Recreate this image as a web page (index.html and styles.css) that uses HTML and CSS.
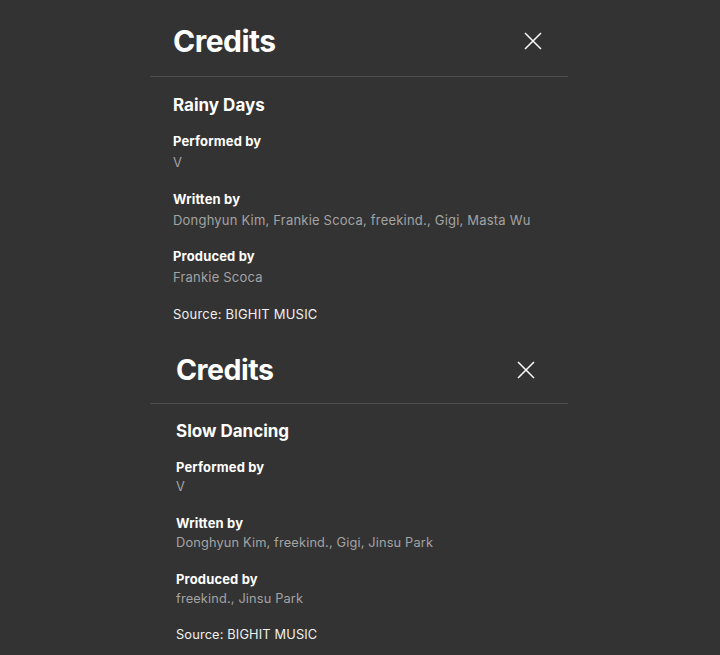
FILE: index.html
```html
<!DOCTYPE html>
<html lang="en">
<head>
    <meta charset="UTF-8">
    <meta name="viewport" content="width=device-width, initial-scale=1.0">
    <title>Credits</title>
    <link rel="stylesheet" href="styles.css">
</head>
<body>
    <div class="credits">
        <div class="credits-header">
            <h1 class="credits-title">Credits</h1>
            <button class="close-btn" aria-label="Close">
                <svg width="18" height="18" viewBox="0 0 18 18"><path d="M1 1L17 17M17 1L1 17" stroke="#fff" stroke-width="1.5" fill="none"/></svg>
            </button>
        </div>
        <div class="credits-body">
            <h2 class="track-name">Rainy Days</h2>
            <div class="role">
                <div class="role-label">Performed by</div>
                <div class="role-names">V</div>
            </div>
            <div class="role">
                <div class="role-label">Written by</div>
                <div class="role-names">Donghyun Kim, Frankie Scoca, freekind., Gigi, Masta Wu</div>
            </div>
            <div class="role">
                <div class="role-label">Produced by</div>
                <div class="role-names">Frankie Scoca</div>
            </div>
            <div class="source">Source: BIGHIT MUSIC</div>
        </div>
    </div>

    <div class="credits credits-second">
        <div class="credits-header">
            <h1 class="credits-title">Credits</h1>
            <button class="close-btn" aria-label="Close">
                <svg width="18" height="18" viewBox="0 0 18 18"><path d="M1 1L17 17M17 1L1 17" stroke="#fff" stroke-width="1.5" fill="none"/></svg>
            </button>
        </div>
        <div class="credits-body">
            <h2 class="track-name">Slow Dancing</h2>
            <div class="role">
                <div class="role-label">Performed by</div>
                <div class="role-names">V</div>
            </div>
            <div class="role">
                <div class="role-label">Written by</div>
                <div class="role-names">Donghyun Kim, freekind., Gigi, Jinsu Park</div>
            </div>
            <div class="role">
                <div class="role-label">Produced by</div>
                <div class="role-names">freekind., Jinsu Park</div>
            </div>
            <div class="source">Source: BIGHIT MUSIC</div>
        </div>
    </div>
</body>
</html>
```

FILE: styles.css
```css
body {
    margin: 0;
    background: #333333;
    font-family: Inter, "Noto Sans", sans-serif;
    color: #fff;
}
.credits {
    width: 418px;
    margin-left: 150px;
}
.credits-header {
    height: 77px;
    display: flex;
    align-items: center;
    justify-content: space-between;
    padding: 5px 26px 0 23px;
    box-sizing: border-box;
    border-bottom: 1px solid #4e4e4e;
}
.credits-title {
    margin: 0;
    font-size: 30px;
    font-weight: 700;
    letter-spacing: -0.5px;
    line-height: 40px;
}
.close-btn {
    background: none;
    border: 0;
    padding: 0;
    width: 18px;
    height: 18px;
    display: flex;
}
.credits-body {
    padding: 16px 23px 0;
}
.track-name {
    margin: 0 0 14px;
    font-size: 17px;
    font-weight: 700;
    line-height: 24px;
}
.role {
    margin-bottom: 15.5px;
}
.role-label {
    font-size: 13px;
    font-weight: 700;
    line-height: 21px;
    letter-spacing: 0.15px;
}
.role-names {
    font-size: 13px;
    line-height: 21px;
    letter-spacing: 0.2px;
    color: #a3a3a3;
}
.source {
    font-size: 13px;
    line-height: 21px;
    letter-spacing: 0.2px;
    color: #f0f0f0;
}
.credits-second .credits-header {
    height: 79px;
    padding: 12px 33px 0 26px;
}
.credits-second .credits-title {
    font-size: 28.5px;
}
.credits-second .credits-body {
    padding-left: 26px;
    padding-top: 15px;
}
.credits-second .role-label,
.credits-second .role-names,
.credits-second .source {
    line-height: 20.5px;
}
.credits-second .role-names,
.credits-second .source {
    font-size: 12.8px;
    letter-spacing: 0.15px;
}
.credits-second .role {
    margin-bottom: 15px;
}
```
